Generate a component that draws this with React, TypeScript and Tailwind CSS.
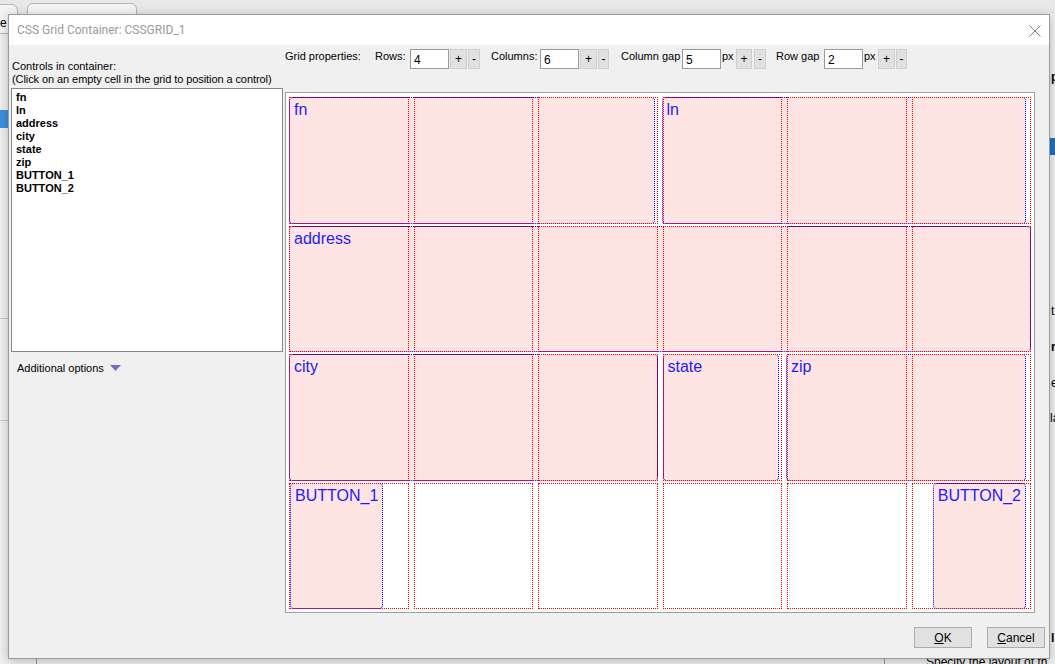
import React from "react";

const COL = ["col-start-1", "col-start-2", "col-start-3", "col-start-4", "col-start-5", "col-start-6"];
const ROW = ["row-start-1", "row-start-2", "row-start-3", "row-start-4"];

const controls = [
  { label: "fn", place: "col-start-1 col-span-3 row-start-1 mr-[3px]" },
  { label: "ln", place: "col-start-4 col-span-3 row-start-1 -ml-[1px] mr-[5px]" },
  { label: "address", place: "col-start-1 col-span-6 row-start-2" },
  { label: "city", place: "col-start-1 col-span-3 row-start-3" },
  { label: "state", place: "col-start-4 col-span-1 row-start-3 mr-[3px]" },
  { label: "zip", place: "col-start-5 col-span-2 row-start-3 -ml-[1px] mr-[5px]" },
  { label: "BUTTON_1", place: "col-start-1 row-start-4 justify-self-start ml-[1px] pr-[4px]" },
  { label: "BUTTON_2", place: "col-start-6 row-start-4 justify-self-end mr-[5px] pr-[4px]" },
];

const listItems = ["fn", "ln", "address", "city", "state", "zip", "BUTTON_1", "BUTTON_2"];

const SpinButton: React.FC<{ sign: string; w: string; ml: string }> = ({ sign, w, ml }) => (
  <button
    type="button"
    className={`${w} ${ml} flex h-[20px] items-center justify-center border border-[#cfcfcf] bg-[#e1e1e1] text-[12px] leading-none text-black`}
  >
    {sign}
  </button>
);

const NumField: React.FC<{ value: string }> = ({ value }) => (
  <div className="flex h-[20px] w-[39px] items-center border border-[#9a9a9a] bg-white pl-[3px] pt-[2px] text-[12px] text-black">
    {value}
  </div>
);

const App: React.FC = () => {
  return (
    <div
      className="relative h-[664px] w-[1055px] overflow-hidden bg-[#f0f0f0] text-black"
      style={{ fontFamily: '"Liberation Sans", Arial, sans-serif' }}
    >
      {/* background application peeking out */}
      <div className="absolute left-0 top-0 h-[14px] w-full bg-[#e8e8e8]" />
      <div className="absolute left-[-6px] top-[4px] h-[30px] w-[24px] rounded-[6px] border border-[#b5b5b5] bg-[#f4f4f4]" />
      <div className="absolute left-[27px] top-[3px] h-[20px] w-[110px] rounded-[6px] border border-[#b5b5b5] bg-[#f4f4f4]" />
      <div className="absolute left-[0px] top-[14px] text-[12px]">e</div>
      <div className="absolute left-0 top-[110px] h-[18px] w-[8px] bg-[#3d8ee0]" />
      <div className="absolute left-0 top-[318px] h-px w-[8px] bg-[#c8c8c8]" />
      <div className="absolute left-0 top-[420px] h-px w-[8px] bg-[#c8c8c8]" />
      <div className="absolute left-[36px] top-[650px] h-[14px] w-px bg-[#9a9a9a]" />
      <div className="absolute left-[884px] top-[650px] h-[14px] w-px bg-[#9a9a9a]" />
      <div className="absolute left-[926px] top-[653px] whitespace-nowrap text-[12px]">Specify the layout of th</div>
      <div className="absolute left-[1051px] top-[68px] text-[12px] font-bold">p</div>
      <div className="absolute left-[1050px] top-[138px] h-[17px] w-[6px] bg-[#1a73c8]" />
      <div className="absolute left-[1051px] top-[302px] text-[12px]">t</div>
      <div className="absolute left-[1051px] top-[338px] text-[12px] font-bold">r</div>
      <div className="absolute left-[1051px] top-[374px] text-[12px]">e</div>
      <div className="absolute left-[1050px] top-[409px] text-[12px]">la</div>
      <div className="absolute left-[1051px] top-[629px] text-[12px] font-bold">l</div>

      {/* dialog window */}
      <div className="absolute left-[8px] top-[14px] flex h-[645px] w-[1042px] flex-col border border-[#9b9b9b] bg-[#f0f0f0] shadow-[0_2px_10px_rgba(0,0,0,0.25)]">
        <div className="flex h-[30px] items-center justify-between bg-white pl-[8px] pr-[8px]">
          <span className="text-[12px] text-[#9a9a9a]" style={{ fontFamily: "Roboto, sans-serif" }}>
            CSS Grid Container: CSSGRID_1
          </span>
          <svg width="12" height="12" viewBox="0 0 12 12" className="mt-[1px]">
            <path d="M0.5 0.5 L11.5 11.5 M11.5 0.5 L0.5 11.5" stroke="#7a7a7a" strokeWidth="1" fill="none" />
          </svg>
        </div>

        <div className="flex flex-1 flex-col">
          <div className="flex">
            {/* left panel */}
            <div className="ml-[2px] w-[272px] pt-[15px] text-[11px] leading-[13px]">
              <div className="pl-[1px]">Controls in container:</div>
              <div className="whitespace-nowrap pl-[1px] tracking-[-0.08px]">
                (Click on an empty cell in the grid to position a control)
              </div>
              <div className="mt-[2px] h-[264px] border border-[#828790] bg-white px-[4px] pt-[2px]">
                {listItems.map((it) => (
                  <div key={it} className="font-bold leading-[13px]">
                    {it}
                  </div>
                ))}
              </div>
              <div className="mt-[9px] flex items-center pl-[6px] leading-[14px]">
                <span>Additional options</span>
                <svg width="11" height="6" viewBox="0 0 11 6" className="ml-[6px]">
                  <path d="M0 0 H11 L5.5 6 Z" fill="#7070c2" />
                </svg>
              </div>
            </div>

            {/* right panel */}
            <div className="ml-[2px] w-[750px]">
              <div className="flex h-[47px] items-start pt-[4px] text-[11px] leading-[14px]">
                <span className="w-[90px]">Grid properties:</span>
                <span className="w-[35px]">Rows:</span>
                <NumField value="4" />
                <SpinButton sign="+" w="w-[17px]" ml="ml-[1px]" />
                <SpinButton sign="-" w="w-[12px]" ml="ml-[1px]" />
                <span className="ml-[11px] w-[49px]">Columns:</span>
                <NumField value="6" />
                <SpinButton sign="+" w="w-[17px]" ml="ml-[1px]" />
                <SpinButton sign="-" w="w-[11px]" ml="ml-[1px]" />
                <span className="ml-[12px] w-[61px]">Column gap</span>
                <NumField value="5" />
                <span className="ml-[1px] w-[14px]">px</span>
                <SpinButton sign="+" w="w-[16px]" ml="ml-[0px]" />
                <SpinButton sign="-" w="w-[12px]" ml="ml-[2px]" />
                <span className="ml-[10px] w-[48px]">Row gap</span>
                <NumField value="2" />
                <span className="ml-[1px] w-[14px]">px</span>
                <SpinButton sign="+" w="w-[17px]" ml="ml-[0px]" />
                <SpinButton sign="-" w="w-[11px]" ml="ml-[1px]" />
              </div>

              <div className="h-[521px] w-[750px] border border-[#a0a0a0] bg-white px-[3px] pb-[3px] pt-[4px]">
                <div className="grid h-full grid-cols-6 grid-rows-4 gap-x-[5px] gap-y-[2px]">
                  {controls.map((c) => (
                    <div
                      key={c.label}
                      className={`${c.place} rounded-[4px] border border-dotted border-[#0000ff] bg-[#ffe4e4] pl-[4px] pt-[3px] text-[16px] leading-[18px] text-[#1c1cff]`}
                    >
                      {c.label}
                    </div>
                  ))}
                  {ROW.map((r) =>
                    COL.map((c) => (
                      <div key={r + c} className={`${r} ${c} pointer-events-none border border-dotted border-[#ff0000]`} />
                    ))
                  )}
                </div>
              </div>
            </div>
          </div>

          <div className="mr-[4px] mt-[14px] flex justify-end gap-[15px] text-[12px]">
            <button type="button" className="flex h-[21px] w-[58px] items-center justify-center border border-[#adadad] bg-[#e1e1e1]">
              <span className="underline">O</span>K
            </button>
            <button type="button" className="flex h-[21px] w-[58px] items-center justify-center border border-[#adadad] bg-[#e1e1e1]">
              <span className="underline">C</span>ancel
            </button>
          </div>
        </div>
      </div>
    </div>
  );
};

export default App;
